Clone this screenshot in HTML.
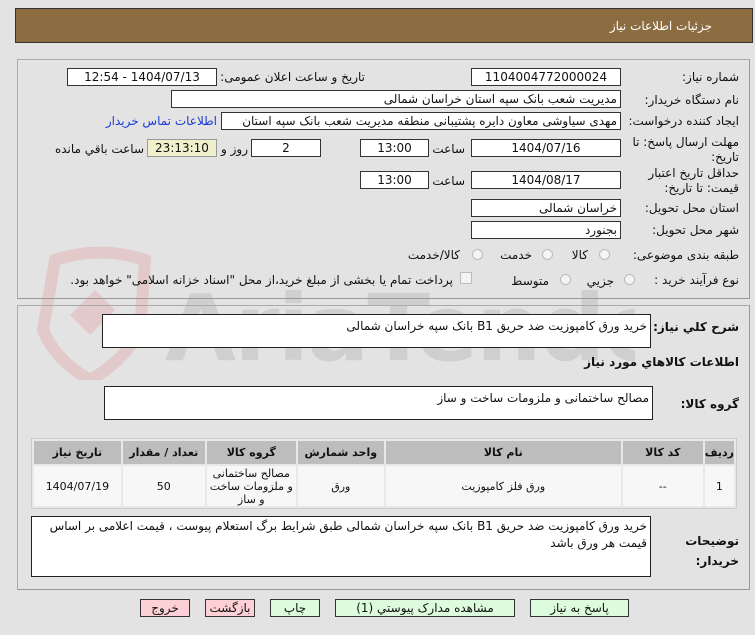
<!DOCTYPE html>
<html><head><meta charset="utf-8"><style>
*{box-sizing:border-box;margin:0;padding:0}
body{width:755px;height:635px;background:#e3e3e3;font-family:"DejaVu Sans","Liberation Sans",sans-serif;font-size:11px;color:#111;position:relative;overflow:hidden}
.a{position:absolute;white-space:nowrap}
.hdr{left:15px;top:8px;width:738px;height:35px;background:#8c6d42;border:1px solid #333;}
.hdr span{position:absolute;right:40px;top:10px;color:#fff;font-size:12px}
.pan{position:absolute;border:1px solid #aaa;border-right-color:#999;border-bottom-color:#999}
.in{position:absolute;background:#fff;border:1px solid #333;height:18px;text-align:center;font-size:12px;line-height:16px;direction:rtl;overflow:hidden}
.l{position:absolute;direction:rtl;white-space:nowrap;font-size:12px}
.r{text-align:right;padding-right:3px}
.rad{position:absolute;width:11px;height:11px;border-radius:50%;border:1px solid #bbb;background:#f4f4f4}
.ta{position:absolute;background:#fff;border:1px solid #222;direction:rtl;text-align:right;padding:3px 3px;font-size:12px;line-height:19px}
table{position:absolute;left:31px;top:438px;width:706px;height:71px;border-collapse:separate;border-spacing:2px;background:#e8e8e8;border:1px solid #ccc;direction:rtl}
th{background:#bdbdbd;font-weight:bold;height:23px;font-size:11px}
td{background:#f7f7f7;text-align:center;font-size:11px;line-height:13px}
.btn{position:absolute;top:599px;height:18px;border:1px solid #333;font-size:12px;text-align:center;line-height:16px;direction:rtl}
.g{background:#ddfcdd}.p{background:#fcd0d4}
</style></head><body>
<div class="a hdr"><span>جزئیات اطلاعات نیاز</span></div>
<!-- watermark -->
<svg class="a" style="left:15px;top:240px;opacity:.4" width="620" height="140" viewBox="0 0 620 140">
<path d="M40 20 Q85 5 130 20 L125 90 Q110 120 75 140 Q40 120 28 90 Z" fill="none" stroke="#e3a5a5" stroke-width="12"/>
<path d="M55 75 L80 50 L100 70 L75 95 Z" fill="#e3a5a5"/>
<text x="150" y="120" font-family="DejaVu Sans" font-weight="bold" font-size="92" fill="#b3b3b3" letter-spacing="-2">AriaTender.net</text>
</svg>
<div class="pan" style="left:17px;top:59px;width:733px;height:240px"></div>
<div class="pan" style="left:17px;top:305px;width:733px;height:285px"></div>

<div class="l" style="right:16px;top:70px">شماره نیاز:</div>
<div class="in" style="left:471px;top:68px;width:150px">1104004772000024</div>
<div class="l" style="right:390px;top:70px">تاریخ و ساعت اعلان عمومی:</div>
<div class="in" style="left:67px;top:68px;width:150px">1404/07/13 - 12:54</div>

<div class="l" style="right:16px;top:93px">نام دستگاه خریدار:</div>
<div class="in r" style="left:171px;top:90px;width:450px">مدیریت شعب بانک سپه استان خراسان شمالی</div>

<div class="l" style="right:16px;top:114px">ایجاد کننده درخواست:</div>
<div class="in r" style="left:221px;top:112px;width:400px">مهدی سیاوشی معاون دایره پشتیبانی منطقه مدیریت شعب بانک سپه استان خراسان</div>
<div class="l" style="right:538px;top:114px;color:#1a3ad6">اطلاعات تماس خریدار</div>

<div class="l" style="right:16px;top:135px;line-height:15px;text-align:right">مهلت ارسال پاسخ: تا<br>تاریخ:</div>
<div class="in" style="left:471px;top:139px;width:150px">1404/07/16</div>
<div class="l" style="right:290px;top:142px">ساعت</div>
<div class="in" style="left:360px;top:139px;width:69px">13:00</div>
<div class="in" style="left:251px;top:139px;width:70px">2</div>
<div class="l" style="right:507px;top:142px">روز و</div>
<div class="in" style="left:147px;top:139px;width:70px;background:#f1f0cc;border-color:#999">23:13:10</div>
<div class="l" style="right:611px;top:142px">ساعت باقي مانده</div>

<div class="l" style="right:16px;top:166px;line-height:15px;text-align:right">حداقل تاریخ اعتبار<br>قیمت: تا تاریخ:</div>
<div class="in" style="left:471px;top:171px;width:150px">1404/08/17</div>
<div class="l" style="right:290px;top:174px">ساعت</div>
<div class="in" style="left:360px;top:171px;width:69px">13:00</div>

<div class="l" style="right:16px;top:201px">استان محل تحویل:</div>
<div class="in r" style="left:471px;top:199px;width:150px">خراسان شمالی</div>
<div class="l" style="right:16px;top:223px">شهر محل تحویل:</div>
<div class="in r" style="left:471px;top:221px;width:150px">بجنورد</div>

<div class="l" style="right:16px;top:248px">طبقه بندی موضوعی:</div>
<div class="rad" style="left:599px;top:249px"></div><div class="l" style="right:167px;top:248px">کالا</div>
<div class="rad" style="left:542px;top:249px"></div><div class="l" style="right:223px;top:248px">خدمت</div>
<div class="rad" style="left:472px;top:249px"></div><div class="l" style="right:295px;top:248px">کالا/خدمت</div>

<div class="l" style="right:16px;top:273px">نوع فرآیند خرید :</div>
<div class="rad" style="left:624px;top:274px"></div><div class="l" style="right:141px;top:274px">جزیي</div>
<div class="rad" style="left:560px;top:274px"></div><div class="l" style="right:206px;top:274px">متوسط</div>
<div class="a" style="left:460px;top:272px;width:12px;height:12px;border:1px solid #bbb;background:#f4f4f4"></div>
<div class="l" style="right:302px;top:273px">پرداخت تمام یا بخشی از مبلغ خرید،از محل "اسناد خزانه اسلامی" خواهد بود.</div>

<div class="l" style="right:16px;top:320px;font-weight:bold">شرح کلي نیاز:</div>
<div class="ta" style="left:102px;top:314px;width:549px;height:34px;padding-top:2px">خرید ورق کامپوزیت ضد حریق B1 بانک سپه خراسان شمالی</div>
<div class="l" style="right:16px;top:355px;font-weight:bold">اطلاعات کالاهاي مورد نیاز</div>
<div class="l" style="right:16px;top:397px;font-weight:bold">گروه کالا:</div>
<div class="ta" style="left:104px;top:386px;width:549px;height:34px;padding-top:2px">مصالح ساختمانی و ملزومات ساخت و ساز</div>

<table><tr><th style="width:27px">ردیف</th><th style="width:80px">کد کالا</th><th style="width:235px">نام کالا</th><th style="width:86px">واحد شمارش</th><th style="width:89px">گروه کالا</th><th style="width:82px">تعداد / مقدار</th><th>تاریخ نیاز</th></tr>
<tr><td>1</td><td>--</td><td>ورق فلز کامپوزیت</td><td>ورق</td><td>مصالح ساختمانی<br>و ملزومات ساخت<br>و ساز</td><td>50</td><td>1404/07/19</td></tr></table>

<div class="l" style="right:16px;top:531px;font-weight:bold;line-height:20px;text-align:right">توضیحات<br>خریدار:</div>
<div class="ta" style="left:31px;top:516px;width:620px;height:61px;padding-top:1px;line-height:17px;white-space:normal">خرید ورق کامپوزیت ضد حریق B1 بانک سپه خراسان شمالی طبق شرایط برگ استعلام پیوست ، قیمت اعلامی بر اساس قیمت هر ورق باشد</div>

<div class="btn g" style="left:530px;width:99px">پاسخ به نیاز</div>
<div class="btn g" style="left:335px;width:180px">مشاهده مدارک پیوستي (1)</div>
<div class="btn g" style="left:270px;width:50px">چاپ</div>
<div class="btn p" style="left:205px;width:50px">بازگشت</div>
<div class="btn p" style="left:140px;width:50px">خروج</div>
</body></html>
